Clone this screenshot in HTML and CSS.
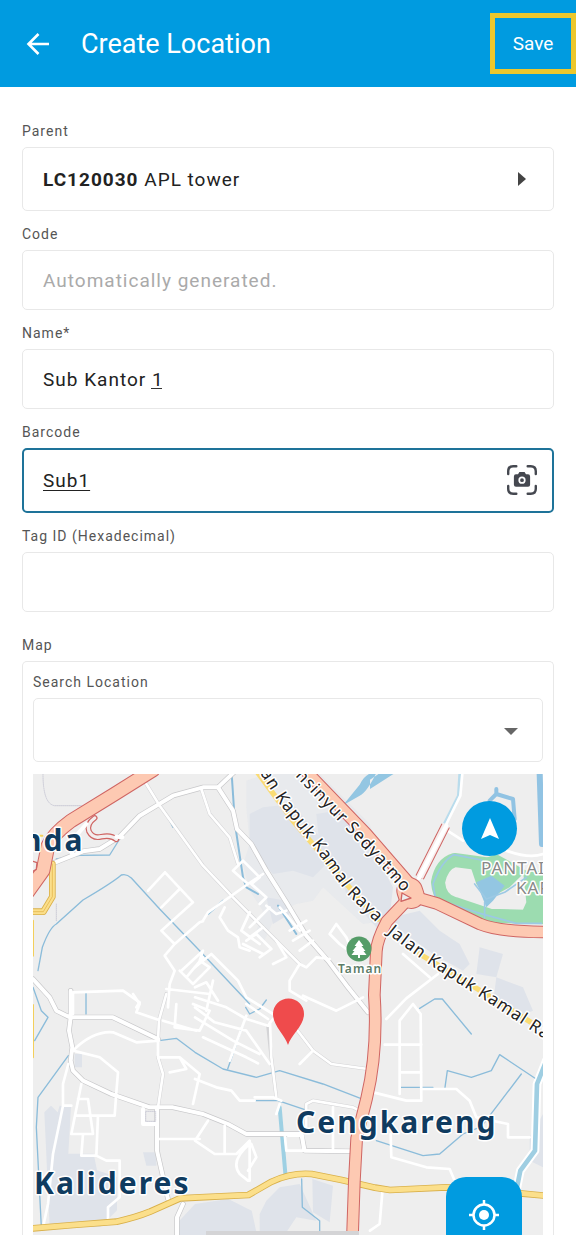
FILE: index.html
```html
<!DOCTYPE html>
<html lang="en">
<head>
<meta charset="utf-8">
<meta name="viewport" content="width=device-width, initial-scale=1">
<title>Create Location</title>
<link rel="stylesheet" href="styles.css">
</head>
<body>
<div class="screen">
  <header class="app-bar">
    <button class="back" type="button" aria-label="Back">
      <svg viewBox="0 0 24 24" width="24" height="24" fill="none" stroke="currentColor" stroke-width="2.6"><path d="M23 12H3M12.5 2 2.5 12l10 10"/></svg>
    </button>
    <h1 class="title">Create Location</h1>
    <button class="save" type="submit" form="location-form">Save</button>
  </header>

  <form class="form" id="location-form">
    <div class="field">
      <label class="label" for="parent">Parent</label>
      <button class="box box-tall picker" id="parent" type="button">
        <span><b>LC120030</b> APL tower</span>
        <svg class="picker-arrow" viewBox="0 0 8 14" width="8" height="14" fill="currentColor"><path d="M0 0l8 7-8 7z"/></svg>
      </button>
    </div>
    <div class="field">
      <label class="label" for="code">Code</label>
      <input class="box" id="code" type="text" placeholder="Automatically generated." readonly>
    </div>
    <div class="field">
      <label class="label" for="name">Name*</label>
      <div class="input-wrap">
        <input class="box" id="name" type="text" value="Sub Kantor 1">
        <span class="composing"></span>
      </div>
    </div>
    <div class="field">
      <label class="label" for="barcode">Barcode</label>
      <div class="input-wrap">
        <input class="box box-active" id="barcode" type="text" value="Sub1">
        <button class="scan" type="button" aria-label="Scan barcode">
          <svg viewBox="0 0 87 87" width="30" height="30">
            <g fill="none" stroke="currentColor" stroke-width="7" stroke-linecap="round"><path d="M3.500 26V18Q3.500 3.500 18 3.500H27M60 3.500H69Q83.500 3.500 83.500 18V26M83.500 61V69Q83.500 83.500 69 83.500H60M27 83.500H18Q3.500 83.500 3.500 69V61"/></g>
            <path fill="currentColor" d="M26 27h6l4-7h15l4 7h6q6 0 6 6v24q0 6-6 6H26q-6 0-6-6V33q0-6 6-6z"/>
            <circle cx="43.500" cy="44" r="8" fill="none" stroke="#fff" stroke-width="5"/>
          </svg>
        </button>
      </div>
    </div>
    <div class="field">
      <label class="label" for="tag">Tag ID (Hexadecimal)</label>
      <input class="box" id="tag" type="text">
    </div>

    <section class="field map-field" aria-labelledby="map-title">
      <h2 class="label" id="map-title">Map</h2>
      <div class="map-card">
        <div class="field">
          <label class="label" for="search">Search Location</label>
          <div class="input-wrap">
            <select class="box box-tall" id="search"><option value=""></option></select>
            <svg class="caret" viewBox="0 0 14 7" width="14" height="7" fill="currentColor"><path d="M0 0h14L7 7z"/></svg>
          </div>
        </div>
        <div class="map">
          <svg class="map-art" viewBox="0 0 510 461" preserveAspectRatio="xMidYMin slice" role="img" aria-label="Map of Cengkareng and Kalideres">
            <defs>
              <path id="kapuk-a" d="M227 -1L246 29L282 75L315 121L352 157"/>
              <path id="kapuk-b" d="M354 159Q372 174 397 191L442 220L530 277"/>
              <path id="sedyatmo" d="M262 2L308 50L340 84L382 132"/>
            </defs>
            <g transform="scale(.33333)" fill="none" stroke-linejoin="round" stroke-linecap="round">
              <path fill="#eee" d="M0 0h1530v1400H0z"/>
              <!-- built-up areas -->
              <g fill="#dfe3ea">
                <path d="M640 20l60-20h160l150 150 60 180-20 110-60 10-120-110-30 40-50 10-60 30-40 90-20-40 20-60-40-60-20-80 20-60-10-110z" opacity=".4"/>
                <path d="M650 120l40-20 90-10 90 110 20 60-50 50-60-20-60 10-70-80zM850 120l60-10 120 140 50 90-10 90-40 30-90-100-20-70-60-70z"/>
                <path d="M700 370l60 10 10 40-50 30zM1080 430l80-20 60 60 60 40 30 60-20 20-90-50-110-80zM1340 520l70 20-20 70-60-10zM1390 610l80 30 30 70-50 20-70-40z"/>
                <path d="M34 1015l20-20 20 20 6-20 34 4-8 140 76 0 10 50 60 20v100l-50 50H50zM330 1135h40v40h-30zM125 840h22v40h-22z"/>
                <path d="M486 1290l100-15 70 35 20 90H430v-50zM680 1320l20-40 40-40 60-10 50 110-60-10-40 60h-70zM838 1215l62 20-10 110-50-30zM1490 1090l40-70v160l-40-20z"/>
              </g>
              <!-- green park and lakes -->
              <path stroke="#9cdcb0" stroke-width="42" d="M1370 272L1265 258Q1225 270 1215 325Q1220 380 1265 390L1370 425L1550 430"/>
              <path fill="#9cdcb0" d="M1310 270l80-30 90 50-50 50-65 35-35-45zM1470 290h60v150h-75l25-55z"/>
              <path fill="#93c6e2" d="M1330 325l45-20 40 30-35 45-20 20zM930 94l50-62q20-40 50-35-30 60-50 68zM1011 45l75-48h-45l-30 20z"/>
              <g stroke="#9cc9e4" stroke-width="5"><path d="M1345 258L1262 242Q1225 262 1200 330L1208 375L1330 415L1450 448L1525 448M1360 375L1415 355L1480 310M1360 375L1325 330M1355 385v45"/></g>
              <path stroke="#91c3e3" stroke-width="12" d="M1370 80l20-20 50 15 5 60M1390 45v15"/>
              <path stroke="#91c3e3" stroke-width="18" d="M1520 0L1527 210"/>
              <path stroke="#fff" stroke-width="26" d="M1540 860L1512 930L1506 1130L1462 1190L1452 1240"/>
              <path stroke="#9fcee2" stroke-width="14" d="M1540 860L1512 930L1506 1130L1462 1190L1452 1240"/>
              <path stroke="#b9dcec" stroke-width="8" d="M1280 0L1276 65L1228 160"/>
              <g stroke="#8bbcda" stroke-width="4">
                <path d="M15 590L28 520Q50 460 70 450L150 378Q240 325 265 303Q280 298 295 312L380 405L500 530L650 690"/>
                <path d="M0 640L25 710L45 730L5 800M106 845L15 970L10 1060L25 1360M159 655V720"/>
                <path d="M70 255L140 244L230 243L260 195M373 82L400 120L420 160"/>
                <path stroke-width="6" d="M596 0L606 150L630 310L640 340L675 360M735 395L790 480M525 420L570 380"/>
                <path d="M378 800L430 793L486 835L570 885L670 910L740 890L870 930L1000 980"/>
                <path d="M638 730L584 885M638 700l12 20 30-15 20-27M665 980H735L840 1015M1030 1100L1170 1145L1220 1140L1290 1080L1345 1058L1465 900"/>
                <path d="M1160 703L1205 675L1228 675L1315 780M1236 940L1243 890L1315 910L1375 890L1400 842L1505 912M1100 940H1200M806 1215L808 1300L860 1340V1400"/>
              </g>
              <path stroke="#9ed0e3" stroke-width="12" d="M740 1000L758 1210"/>
              <!-- street casings -->
              <g stroke="#c8c8ca" stroke-width="16">
                <path d="M60 268L150 232L200 225L260 188L320 125L420 65L510 40H555L608 -10"/>
                <path d="M555 40L600 110L612 165L655 210L700 290L760 385L820 485L885 560L945 640L1005 715"/>
                <path d="M0 615L50 670L70 710L110 730H240L375 795M113 650V730L108 770L118 820L113 860L120 890L150 920L235 960L350 1000H420L510 1020L585 1050L640 1080H805L815 1130L955 1132M372 1000V1130L405 1275M432 1400V1330L450 1290"/>
              </g>
              <g stroke="#d4d4d6" stroke-width="11">
                <path d="M340 30L380 95L510 275L600 370L700 470L800 570M505 45L530 120L590 190L615 270M400 660L378 738L375 800M375 850L390 900L375 1000M705 755L715 850L730 970M790 765L840 830L895 870L1005 885M820 1070V990L840 980L960 1000L1000 1020"/>
              </g>
              <!-- minor streets -->
              <g stroke="#fff" stroke-width="8">
                <path d="M340 30L380 95L510 275L600 370L700 470L800 570L820 580L850 550L890 555M505 45L530 120L590 190L615 270"/>
                <path d="M396 295L480 385L385 470L425 510L500 445L510 442M396 295L345 350M440 345L385 400M425 510L395 545L425 590L410 630L405 700M400 645L530 660M445 590L510 530L500 560L530 580L480 630L440 590M460 610L510 550"/>
                <path d="M120 720V655L270 650L320 685L310 700M510 440L525 415L645 330L690 300M645 330L600 290L630 260L680 310L655 330L700 370L680 390M575 400L560 430L585 470L615 490L620 520L650 530M650 460L710 400M640 500L670 480L715 525L680 550M740 400L800 470M770 470L820 440M780 500L830 470M800 530L840 500M690 460L650 490M730 500L760 550L720 570M630 510L690 540"/>
                <path d="M700 395L730 420L760 410M650 415L625 470L680 510M890 480L910 450L940 490L960 540L920 510zM800 570L770 620V650L820 680"/>
                <path d="M486 580L535 540L615 620L640 670L720 720M486 640L520 625L555 680M540 620L520 710M486 700L545 745L640 770L710 870M640 725L590 860M486 730L600 800L680 840M510 790L640 850L675 868"/>
                <path d="M300 660L320 690L310 715L378 738M400 660L378 738L375 800M375 800V850L440 850L460 885L410 895M375 850L390 900L375 1000M440 850L500 900L480 990M390 740L490 770M430 690L425 760L500 770L530 710L480 690M120 830Q180 770 240 775L310 805L378 800M120 830L200 850L255 895L250 955L245 1025H130M145 930L115 1080M135 975H165L180 1080H120M195 1025L190 1145H145L150 1080M190 1145L220 1160H260V1270L225 1300V1350M106 870L90 930V995L60 1140L45 1290L30 1360M92 995H115M378 1095H500"/>
                <path d="M486 915L550 940L595 950L620 980H665M665 970H720L745 980M740 990L730 1020M711 745L715 850L730 970M790 765L840 830L895 870L1005 885M840 830L800 870M640 690L705 735M486 670L580 700L640 735L705 755L720 735M810 665L910 710L930 700L990 670M820 1070V990L840 980L960 1000L1000 1020M765 1085H810V1130H760L755 1080M900 1125V1000M486 1100L545 1140H610L650 1100V1220M650 1110Q590 1160 620 1200L645 1220M655 1110L670 1150L645 1190M525 1040L486 1100M575 1055V1140"/>
                <path d="M1048 1255L1040 1350L1011 1370M1073 1080L1075 1150L1180 1180L1250 1185L1265 1220M1000 950L1120 980H1165L1163 720L1140 690L1100 740V960M1055 812H1165M1100 895H1165M1165 945H1270L1310 980L1330 1030L1425 1050V1090H1490M1060 735L1120 673L1215 600M1110 540L1190 610M1235 165L1290 200M1420 230Q1490 255 1530 240"/>
              </g>
              <g stroke="#fff" stroke-width="12">
                <path d="M60 268L150 232L200 225L260 188L320 125L420 65L510 40H555L608 -10"/>
                <path d="M555 40L600 110L612 165L655 210L700 290L760 385L820 485L885 560L945 640L1005 715"/>
                <path d="M0 615L50 670L70 710L110 730H240L375 795M113 650V730L108 770L118 820L113 860L120 890L150 920L235 960L350 1000H420L510 1020L585 1050L640 1080H805L815 1130L955 1132M372 1000V1130L405 1275M432 1400V1330L450 1290"/>
                <path d="M330 1005v45h40M108 220l10 20"/>
                <path stroke-width="8" d="M1288 0L1282 65L1240 150"/>
              </g>
              <path stroke="#bbc" stroke-width="2" d="M338 1012h30v30h-30zM30 0q0 90 35 95h80M70 390v50" stroke-dasharray="3 3"/>
              <!-- secondary roads -->
              <path stroke="#d9b04a" stroke-width="20" d="M0 1363L121 1353L251 1343Q310 1330 351 1313L441 1273L501 1270L646 1263L716 1223Q776 1195 836 1200L926 1218L1026 1241L1071 1248L1241 1240L1461 1258L1535 1265M58 270V368L31 413H0"/>
              <path stroke="#fbdf8b" stroke-width="15" d="M0 1363L121 1353L251 1343Q310 1330 351 1313L441 1273L501 1270L646 1263L716 1223Q776 1195 836 1200L926 1218L1026 1241L1071 1248L1241 1240L1461 1258L1535 1265M58 270V368L31 413H0"/>
              <path stroke="#dfad43" stroke-width="2" d="M58 270V368L31 413H0"/>
              <path stroke="#f3cf5c" stroke-width="6" d="M0 440v105M0 693V850M0 185h28"/>
              <path stroke="#fadc74" stroke-width="16" d="M670 -10L780 140L945 335L1035 435M1160 540L1350 655L1510 755"/>
              <!-- motorways -->
              <g stroke="#cf6563">
                <path stroke-width="17" d="M185 132Q160 150 168 172Q180 195 205 188Q235 182 250 196"/>
                <path stroke-width="28" stroke-linecap="butt" d="M1238 155L1160 310"/>
                <path stroke-width="44" d="M360 -12L245 60L115 140Q60 180 45 215L30 290L-20 360"/>
                <path stroke-width="38" d="M808 -20L1000 180L1130 330M1130 365L1211 388L1341 450Q1400 474 1540 474M1130 370L1061 443Q1031 500 1030 533L1024 663Q1035 830 1001 973L971 1093L964 1223L958 1400"/>
                <path stroke-width="80" d="M1130 350l5 15"/>
              </g>
              <g stroke="#fdc9b2">
                <path stroke="#f3eeee" stroke-width="10" d="M185 132Q160 150 168 172Q180 195 205 188Q235 182 250 196"/>
                <path stroke="#f6eeee" stroke-width="22" stroke-linecap="butt" d="M1240 151L1160 310"/>
                <path stroke-width="38" d="M360 -12L245 60L115 140Q60 180 45 215L30 290L-20 360"/>
                <path stroke-width="32" d="M808 -20L1000 180L1130 330M1130 365L1211 388L1341 450Q1400 474 1540 474M1130 370L1061 443Q1031 500 1030 533L1024 663Q1035 830 1001 973L971 1093L964 1223L958 1400"/>
                <path stroke-width="74" d="M1130 350l5 15"/>
              </g>
              <path stroke="#cf6563" stroke-width="4" fill="#eee" d="M1107 357l27 15-30 10zM0 262l12 4-2 20-10 6"/>
              <path stroke="#fff" stroke-width="12" d="M250 188l18 2M1158 312L1240 155M108 220l10 18M125 190l35-40"/>
            </g>
            <g class="road-name">
              <text><textPath href="#kapuk-a">an Kapuk Kamal Raya</textPath></text>
              <text><textPath href="#kapuk-b">Jalan Kapuk Kamal Raya</textPath></text>
              <text><textPath href="#sedyatmo">nsinyur Sedyatmo</textPath></text>
            </g>
            <text class="area-name" x="448" y="100">PANTAI</text>
            <text class="area-name" x="483" y="120">KAPUK</text>
            <circle cx="326" cy="175" r="12.500" fill="#559c68"/>
            <path fill="#fff" d="M326 166l4.500 6h-2l4 5h-2l3 4h-6.500v3h-2v-3h-6.500l3-4h-2l4-5h-2z"/>
            <text class="poi-name" x="305" y="199">Taman</text>
            <text class="place-name" x="-11" y="77">nda</text>
            <text class="place-name" x="263" y="359">Cengkareng</text>
            <text class="place-name" x="1" y="420">Kalideres</text>
            <path fill="#ef4b4c" d="M255 271C252 261 240 252 240 240a15.500 15.500 0 0 1 31 0C271 252 258 261 255 271z"/>
          </svg>
          <button class="compass" type="button" aria-label="Face north">
            <svg viewBox="0 0 18 21" width="18" height="21" fill="#fff"><path d="M9 0l9 21-9-4-9 4z"/></svg>
          </button>
          <button class="locate" type="button" aria-label="My location">
            <svg viewBox="0 0 30 30" width="30" height="30" fill="none" stroke="#fff" stroke-width="2.500"><circle cx="15" cy="15" r="10.500"/><circle cx="15" cy="15" r="5" fill="#fff" stroke="none"/><path d="M15 0v5M15 25v5M0 15h5M25 15h5"/></svg>
          </button>
          <span class="gesture-bar"></span>
        </div>
      </div>
    </section>
  </form>
</div>
</body>
</html>
```
FILE: styles.css
```css
* { box-sizing: border-box; }

body {
  margin: 0;
  background: #fff;
  color: #222;
  font-family: Roboto, "Liberation Sans", sans-serif;
}

button, input, select { font: inherit; color: inherit; letter-spacing: inherit; }
button { padding: 0; border: 0; background: none; cursor: pointer; }
svg { display: block; }

.screen { display: flex; flex-direction: column; height: 100vh; min-height: 1000px; overflow: hidden; }

.app-bar {
  display: flex;
  align-items: center;
  flex: none;
  height: 87px;
  padding-left: 26px;
  background: #009be0;
  color: #fff;
}
.title { flex: 1; margin: 0 0 0 31px; font-size: 27px; font-weight: 400; line-height: 32px; }
.save { width: 86px; height: 61px; border: 5px solid #edc72c; font-size: 19px; }

.form {
  display: flex;
  flex: 1;
  flex-direction: column;
  gap: 15px;
  min-height: 0;
  padding: 36px 22px 0;
  letter-spacing: 1px;
}
.field { display: flex; flex-direction: column; gap: 8px; }
.label { margin: 0; color: #555; font-size: 14px; font-weight: 400; line-height: 16px; }

.box {
  display: block;
  width: 100%;
  height: 60px;
  padding: 0 20px;
  border: 1px solid #e8e8e8;
  border-radius: 5px;
  outline: 0;
  background: #fff;
  font-size: 19px;
}
.box::placeholder { color: #aaa; opacity: 1; }
.box-tall { height: 64px; }
.box-active { height: 65px; padding: 0 62px 0 19px; border: 2px solid #1e7399; text-decoration: underline; text-underline-offset: 3px; }
.picker { display: flex; align-items: center; justify-content: space-between; padding-right: 27px; text-align: left; }
.picker-arrow { color: #444; }

.input-wrap { position: relative; }
.composing { position: absolute; top: 39px; left: 129px; width: 11px; height: 1px; background: #333; }
.scan { position: absolute; top: 17px; right: 17px; color: #454850; }
.caret { position: absolute; top: 30px; right: 25px; color: #666; pointer-events: none; }
select.box { appearance: none; }

.map-field { flex: 1; min-height: 0; margin-top: 10px; }
.map-card {
  display: flex;
  flex: 1;
  flex-direction: column;
  gap: 12px;
  min-height: 0;
  padding: 12px 10px 0;
  border: 1px solid #e8e8e8;
  border-bottom: 0;
  border-radius: 5px 5px 0 0;
}
.map { position: relative; flex: 1; min-height: 0; overflow: hidden; background: #eee; }
.map-art { width: 100%; height: 100%; font-family: "Noto Sans", "Open Sans", sans-serif; }
.map-art text { paint-order: stroke; stroke: #fff; stroke-width: 3px; stroke-linejoin: round; }
.place-name { fill: #0f3b60; font-size: 30px; font-weight: 700; letter-spacing: 2px; }
.road-name { fill: #222; font-size: 17px; letter-spacing: 1px; }
.area-name { fill: #888; font-size: 17px; letter-spacing: 1px; }
.poi-name { fill: #5c7c68; font-size: 12px; font-weight: 600; letter-spacing: 1px; }

.compass, .locate { position: absolute; display: grid; place-items: center; background: #009be0; }
.compass { top: 27px; right: 26px; width: 55px; height: 55px; border-radius: 50%; }
.locate { right: 21px; bottom: -18px; width: 76px; height: 76px; border-radius: 20px; }
.gesture-bar { position: absolute; bottom: 0; left: 34%; width: 30%; height: 4px; background: #d4d4d6; }
```
